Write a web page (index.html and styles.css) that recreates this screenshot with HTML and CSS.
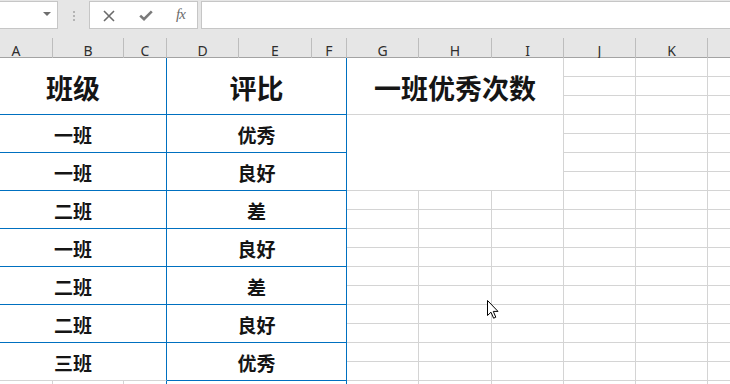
FILE: index.html
```html
<!DOCTYPE html>
<html lang="zh-CN">
<head>
<meta charset="utf-8">
<title>Sheet</title>
<link rel="stylesheet" href="styles.css">
</head>
<body>
<div class="app">
  <div class="toolbar">
    <div class="namebox"><span class="caret"></span></div>
    <div class="grip"><i></i><i></i><i></i></div>
    <div class="fbtns">
      <svg class="ico-x" width="12" height="12" viewBox="0 0 12 12"><path d="M1 1 L11 11 M11 1 L1 11" stroke="#6b6b6b" stroke-width="1.6" fill="none"/></svg>
      <svg class="ico-ok" width="14" height="11" viewBox="0 0 14 11"><path d="M1.2 5.6 L5 9.2 L12.8 1.4" stroke="#7a7a7a" stroke-width="2.6" fill="none"/></svg>
      <span class="fx">fx</span>
    </div>
    <div class="finput"></div>
  </div>
  <div class="colheads">
    <div class="ch">A</div><div class="ch">B</div><div class="ch">C</div><div class="ch">D</div>
    <div class="ch">E</div><div class="ch">F</div><div class="ch">G</div><div class="ch">H</div>
    <div class="ch">I</div><div class="ch">J</div><div class="ch">K</div><div class="ch"></div>
  </div>
  <div class="sheet">
    <div class="grid">
      <div class="cell blue hd c-ac r-h">班级</div>
      <div class="cell blue hd c-df r-h">评比</div>
      <div class="cell gray hd c-gi r-h">一班优秀次数</div>

      <div class="cell blue c-ac r-1">一班</div>
      <div class="cell blue c-df r-1">优秀</div>
      <div class="cell blue c-ac r-2">一班</div>
      <div class="cell blue c-df r-2">良好</div>
      <div class="cell blue c-ac r-3">二班</div>
      <div class="cell blue c-df r-3">差</div>
      <div class="cell blue c-ac r-4">一班</div>
      <div class="cell blue c-df r-4">良好</div>
      <div class="cell blue c-ac r-5">二班</div>
      <div class="cell blue c-df r-5">差</div>
      <div class="cell blue c-ac r-6">二班</div>
      <div class="cell blue c-df r-6">良好</div>
      <div class="cell blue last-left c-ac r-7">三班</div>
      <div class="cell blue c-df r-7">优秀</div>

      <div class="cell gray c-gi r-blank"></div>

      <div class="cell gray tail c-a"></div>
      <div class="cell gray tail c-b"></div>
      <div class="cell gray tail edge c-c"></div>
      <div class="cell blue tail c-df"></div>

      <div class="strip s-g"></div>
      <div class="strip s-h"></div>
      <div class="strip s-i"></div>
      <div class="strip s-j"></div>
      <div class="strip s-k"></div>
      <div class="strip s-l"></div>
    </div>
    <svg class="cursor" width="13" height="20" viewBox="0 0 13 20"><path d="M0.5 0.5 L0.5 15.5 L4 12.2 L6.6 18.2 L8.8 17.2 L6.3 11.4 L11 11.4 Z" fill="#fff" stroke="#000" stroke-width="1"/></svg>
  </div>
</div>
</body>
</html>
```

FILE: styles.css
```css
* { box-sizing: border-box; }
html, body { margin: 0; padding: 0; background: #fff; }
body { width: 730px; height: 384px; overflow: hidden; }

.app {
  width: 730px;
  height: 384px;
  overflow: hidden;
  position: relative;
  font-family: "Noto Sans", "Liberation Sans", sans-serif;
}

/* ---------- toolbar ---------- */
.toolbar {
  height: 38px;
  background: #e6e6e6;
  display: flex;
  align-items: flex-start;
  padding-top: 1px;
}
.namebox {
  width: 59px;
  height: 28px;
  margin-left: -1px;
  background: #fff;
  border: 1px solid #c6c6c6;
  position: relative;
  display: flex;
  align-items: center;
  justify-content: flex-end;
  padding-right: 6px;
}
.caret {
  width: 0;
  height: 0;
  border-left: 4px solid transparent;
  border-right: 4px solid transparent;
  border-top: 4px solid #6e6e6e;
  margin-top: -2px;
}
.grip {
  width: 31px;
  height: 28px;
  display: flex;
  flex-direction: column;
  align-items: center;
  justify-content: center;
  gap: 2px;
  padding-top: 2px;
}
.grip i {
  display: block;
  width: 2px;
  height: 2px;
  background: #b4b4b4;
}
.fbtns {
  width: 109px;
  height: 28px;
  background: #fff;
  border: 1px solid #c6c6c6;
  display: flex;
  align-items: center;
  padding-left: 13px;
}
.ico-x { margin-top: 1px; }
.ico-ok { margin-left: 24px; margin-top: 1px; }
.fx {
  margin-left: 23px;
  font-family: "Liberation Serif", serif;
  font-style: italic;
  font-size: 15px;
  color: #6b6b6b;
  letter-spacing: -1px;
  margin-top: -2px;
}
.finput {
  flex: 1;
  height: 28px;
  margin-left: 3px;
  margin-right: -2px;
  background: #fff;
  border: 1px solid #c6c6c6;
}

/* ---------- column headers ---------- */
.colheads {
  display: grid;
  grid-template-columns: 73px 71px 43px 72px 73px 35px 72px 73px 72px 72px 72px 72px;
  margin-left: -20px;
  height: 20px;
  background: #e6e6e6;
  border-bottom: 1px solid #a3a3a3;
}
.ch {
  border-right: 1px solid #bdbdbd;
  font-size: 14px;
  color: #2e2e2e;
  text-align: center;
  line-height: 19px;
  padding-top: 3px;
}

/* ---------- sheet ---------- */
.sheet {
  height: 326px;
  overflow: hidden;
}
.grid {
  display: grid;
  grid-template-columns: 73px 71px 43px 72px 73px 35px 72px 73px 72px 72px 72px 72px;
  grid-auto-rows: 19px;
  margin-left: -20px;
}
.cell {
  display: flex;
  align-items: center;
  justify-content: center;
  padding-top: 1px;
  font-family: "Noto Sans CJK SC", "Noto Sans", sans-serif;
  font-weight: 700;
  font-size: 19px;
  color: #151515;
  background: #fff;
}
.cell.hd { font-size: 27px; padding-top: 3px; }
.cell.blue { border-right: 1px solid #0070c0; border-bottom: 1px solid #0070c0; }
.cell.gray { border-right: 1px solid #d4d4d4; border-bottom: 1px solid #d4d4d4; }
.cell.last-left { border-bottom-color: #d4d4d4; }
.cell.edge { border-right-color: #0070c0; }

.c-ac { grid-column: 1 / 4; }
.c-df { grid-column: 4 / 7; }
.c-gi { grid-column: 7 / 10; }
.c-a { grid-column: 1; }
.c-b { grid-column: 2; }
.c-c { grid-column: 3; }

.r-h { grid-row: 1 / 4; }
.r-1 { grid-row: 4 / 6; }
.r-2 { grid-row: 6 / 8; }
.r-3 { grid-row: 8 / 10; }
.r-4 { grid-row: 10 / 12; }
.r-5 { grid-row: 12 / 14; }
.r-6 { grid-row: 14 / 16; }
.r-7 { grid-row: 16 / 18; }
.r-blank { grid-row: 4 / 8; }
.tail { grid-row: 18 / 20; }

.strip {
  background: repeating-linear-gradient(to bottom, #fff 0, #fff 18px, #d4d4d4 18px, #d4d4d4 19px);
  border-right: 1px solid #d4d4d4;
}
.s-g { grid-column: 7; grid-row: 8 / 20; }
.s-h { grid-column: 8; grid-row: 8 / 20; }
.s-i { grid-column: 9; grid-row: 8 / 20; }
.s-j { grid-column: 10; grid-row: 1 / 20; }
.s-k { grid-column: 11; grid-row: 1 / 20; }
.s-l { grid-column: 12; grid-row: 1 / 20; }

.cursor {
  position: absolute;
  left: 487px;
  top: 300px;
}
```
